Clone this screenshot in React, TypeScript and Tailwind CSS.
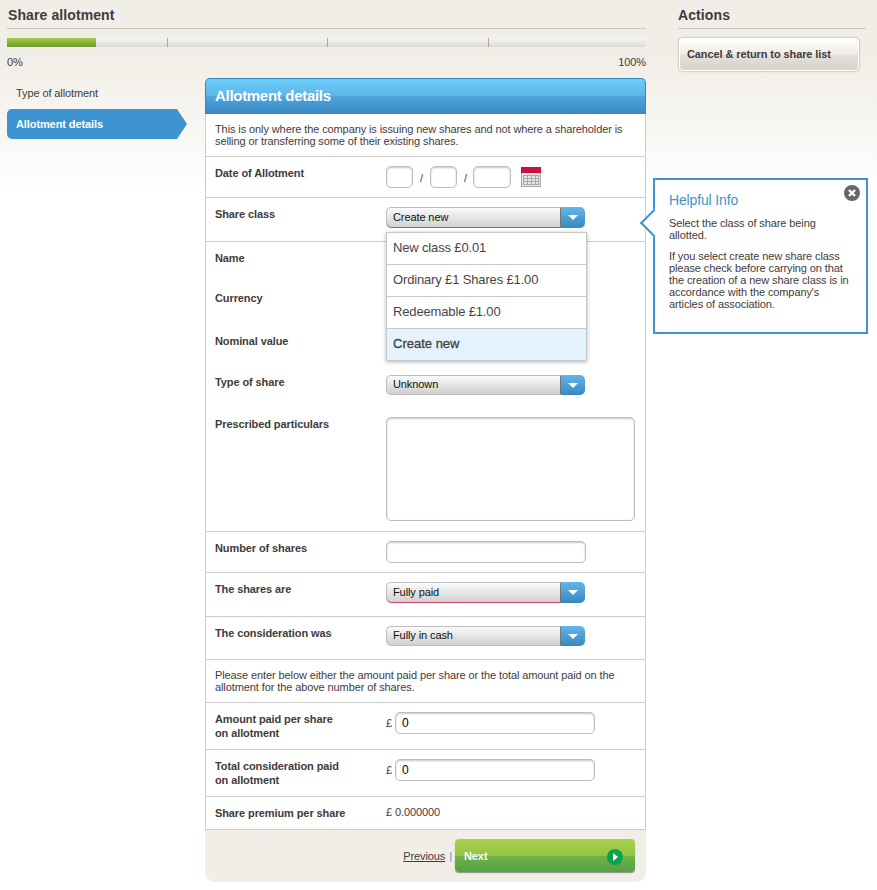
import { ReactNode } from "react";

function Caret() {
  return <span className="h-0 w-0 border-x-[5px] border-t-[5px] border-x-transparent border-t-white" />;
}

function FakeSelect({ value, error }: { value: string; error?: boolean }) {
  return (
    <div className={`flex w-[199px] ${error ? "h-[21px]" : "h-[20px]"}`}>
      <div
        className={`flex flex-1 items-center rounded-l-[5px] border border-r-[#777] border-[#bdbdbd] bg-gradient-to-b from-[#fbfbfb] to-[#cfcfcf] pl-[6px] pb-[2px] text-[11px] text-[#111] ${
          error ? "border-b-0 shadow-[inset_0_-1px_0_#d0476e]" : ""
        }`}
      >
        {value}
      </div>
      <div className="flex w-[24px] items-center justify-center rounded-r-[5px] bg-gradient-to-b from-[#62b6ea] to-[#3a87c0]">
        <Caret />
      </div>
    </div>
  );
}

function TextBox({ className }: { className: string }) {
  return (
    <div className={`rounded-[5px] border border-[#bdbdbd] bg-white text-[12px] leading-[20px] text-black shadow-[inset_0_1px_2px_#c8c8c8] ${className}`} />
  );
}

function Row({
  label,
  height,
  top,
  border = true,
  children,
}: {
  label: ReactNode;
  height: string;
  top: string;
  border?: boolean;
  children?: ReactNode;
}) {
  return (
    <div className={`flex pl-[9px] ${height} ${top} ${border ? "border-b border-[#cccccc]" : ""}`}>
      <div className="w-[171px] shrink-0 text-[11px] font-bold leading-[14px] text-[#3f3b3b]">{label}</div>
      {children}
    </div>
  );
}

function MoneyInput() {
  return (
    <div className="flex items-center self-start text-[11px]">
      <span className="w-[9px]">£</span>
      <div className="flex h-[22px] w-[200px] items-center rounded-[5px] border border-[#bdbdbd] bg-white pl-[6px] text-[12px] text-black shadow-[inset_0_1px_2px_#c8c8c8]">
        0
      </div>
    </div>
  );
}

function CalendarIcon() {
  return (
    <svg width="20" height="20" viewBox="0 0 20 20" className="ml-[10px] mt-px">
      <rect x="0.5" y="0.5" width="19" height="19" fill="#e6e6e6" stroke="#a8a8a8" />
      <rect x="0" y="0" width="20" height="6" fill="#c5123f" />
      <path
        d="M2.5 8.5h15M2.5 11.5h15M2.5 14.5h15M2.5 17.5h15M2.5 8v10M6.5 8v10M10.5 8v10M14.5 8v10M17.5 8v10"
        stroke="#a9a9a9"
        fill="none"
      />
    </svg>
  );
}

function CloseIcon() {
  return (
    <svg width="16" height="16" viewBox="0 0 16 16">
      <circle cx="8" cy="8" r="8" fill="#666666" />
      <path d="M5 5l6 6M11 5l-6 6" stroke="#ffffff" strokeWidth="2.4" />
    </svg>
  );
}

function NextIcon() {
  return (
    <svg width="16" height="16" viewBox="0 0 16 16">
      <circle cx="8" cy="8" r="8" fill="#0ca14a" />
      <path d="M6 4l5 4-5 4z" fill="#ffffff" />
    </svg>
  );
}

function ShareClassMenu() {
  const options = ["New class £0.01", "Ordinary £1 Shares £1.00", "Redeemable £1.00"];
  return (
    <div className="absolute left-[181px] top-[154px] z-10 w-[201px] border border-[#c8c8c8] bg-white text-[13px] tracking-[-0.15px] text-[#4a4545] shadow-[0_1px_4px_rgba(0,0,0,0.3)]">
      {options.map((o) => (
        <div key={o} className="flex h-[32px] items-center border-b border-[#c8c8c8] pb-[2px] pl-[6px]">
          {o}
        </div>
      ))}
      <div className="flex h-[31px] items-center bg-[#e3f2fc] pb-[2px] pl-[6px] tracking-normal text-[#444040] [-webkit-text-stroke:0.3px_#444040]">
        Create new
      </div>
    </div>
  );
}

function HelpfulInfo() {
  return (
    <div className="absolute left-[653px] top-[178px] z-20 h-[156px] w-[215px] border-2 border-[#3d94d1] bg-white pl-[14px] pr-[12px] pt-[12px] text-[11px] leading-[12px] text-[#3f3b3b]">
      <div className="absolute left-[-11px] top-[33px] h-[20px] w-[20px] rotate-45 border-b-2 border-l-2 border-[#3d94d1] bg-white" />
      <div className="absolute right-[6px] top-[5px]">
        <CloseIcon />
      </div>
      <h3 className="relative text-[14px] font-normal leading-[16px] tracking-[-0.15px] text-[#3d94d1]">Helpful Info</h3>
      <p className="relative mt-[9px]">Select the class of share being allotted.</p>
      <p className="mt-[9px]">
        If you select create new share class please check before carrying on that the creation of a new share class is in
        accordance with the company's articles of association.
      </p>
    </div>
  );
}

export default function App() {
  return (
    <div className="relative flex min-h-[890px] w-[877px] bg-[linear-gradient(#f1eee7_0,#f1eee7_60px,#ffffff_195px)] pl-[7px] font-['Liberation_Sans',sans-serif] tracking-[-0.1px] text-[#3f3b3b]">
      <div className="w-[639px] shrink-0">
        <h1 className="h-[29px] border-b border-[#c9c5bd] pl-px pt-[7px] text-[14px] font-bold leading-[16px] tracking-[0.1px]">
          Share allotment
        </h1>
        <div className="mt-[9px] flex h-[9px] bg-gradient-to-b from-[#f5f5f3] to-[#dcdad5]">
          <div className="h-full w-[89px] bg-gradient-to-b from-[#a4cc48] to-[#6f9a2e]" />
          <div className="ml-[71px] h-full w-px bg-[#aaa7a0]" />
          <div className="ml-[159px] h-full w-px bg-[#aaa7a0]" />
          <div className="ml-[160px] h-full w-px bg-[#aaa7a0]" />
        </div>
        <div className="mt-[8px] flex justify-between text-[11px] leading-[14px]">
          <span>0%</span>
          <span>100%</span>
        </div>
        <div className="mt-[9px] flex">
          <nav className="w-[198px] shrink-0 text-[11px] leading-[14px]">
            <div className="pl-[9px] pt-[8px]">Type of allotment</div>
            <div className="mt-[9px] flex h-[30px] w-[180px] items-center rounded-[5px] bg-[#3d94d1] pl-[9px] pb-[1px] font-bold text-white [clip-path:polygon(0_0,170px_0,180px_15px,170px_30px,0_30px)]">
              Allotment details
            </div>
          </nav>
          <main className="relative w-[441px]">
            <div className="flex h-[36px] items-center rounded-t-[5px] border border-b-0 border-[#3385c4] bg-[linear-gradient(#6ccdf8_0,#5ab5e9_50%,#50a6dd_50%,#3787c3_100%)] pl-[9px] text-[15px] font-bold tracking-[-0.3px] text-white">
              Allotment details
            </div>
            <div className="border-x border-[#cccccc] bg-white">
              <div className="h-[43px] border-b border-[#cccccc] px-[9px] pt-[9px] text-[11px] leading-[12px]">
                This is only where the company is issuing new shares and not where a shareholder is selling or transferring
                some of their existing shares.
              </div>
              <Row label="Date of Allotment" height="h-[41px]" top="pt-[9px]">
                <div className="flex items-start text-[11px]">
                  <TextBox className="h-[22px] w-[27px]" />
                  <span className="mx-[7px] mt-[6px] leading-[12px]">/</span>
                  <TextBox className="h-[22px] w-[27px]" />
                  <span className="ml-[7px] mr-[6px] mt-[6px] leading-[12px]">/</span>
                  <TextBox className="h-[22px] w-[38px]" />
                  <CalendarIcon />
                </div>
              </Row>
              <Row label="Share class" height="h-[44px]" top="pt-[9px]">
                <FakeSelect value="Create new" error />
              </Row>
              <Row label="Name" height="h-[39px]" top="pt-[9px]" border={false} />
              <Row label="Currency" height="h-[43px]" top="pt-[10px]" border={false} />
              <Row label="Nominal value" height="h-[41px]" top="pt-[10px]" border={false} />
              <Row label="Type of share" height="h-[41px]" top="pt-[10px]" border={false}>
                <FakeSelect value="Unknown" />
              </Row>
              <Row label="Prescribed particulars" height="h-[126px]" top="pt-[11px]">
                <TextBox className="h-[104px] w-[249px]" />
              </Row>
              <Row label="Number of shares" height="h-[41px]" top="pt-[9px]">
                <TextBox className="h-[22px] w-[200px]" />
              </Row>
              <Row label="The shares are" height="h-[44px]" top="pt-[9px]">
                <FakeSelect value="Fully paid" error />
              </Row>
              <Row label="The consideration was" height="h-[43px]" top="pt-[9px]">
                <FakeSelect value="Fully in cash" />
              </Row>
              <div className="h-[43px] border-b border-[#cccccc] px-[9px] pt-[9px] text-[11px] leading-[12px]">
                Please enter below either the amount paid per share or the total amount paid on the allotment for the above
                number of shares.
              </div>
              <Row
                label={
                  <>
                    Amount paid per share
                    <br />
                    on allotment
                  </>
                }
                height="h-[47px]"
                top="pt-[9px]"
              >
                <MoneyInput />
              </Row>
              <Row
                label={
                  <>
                    Total consideration paid
                    <br />
                    on allotment
                  </>
                }
                height="h-[47px]"
                top="pt-[9px]"
              >
                <MoneyInput />
              </Row>
              <Row label="Share premium per share" height="h-[33px]" top="pt-[9px]">
                <span className="text-[11px] leading-[12px]">£ 0.000000</span>
              </Row>
            </div>
            <div className="flex h-[52px] items-center justify-end rounded-b-[10px] bg-[#f1eee7] pb-[1px] pr-[11px] text-[11px]">
              <a className="mt-[2px] underline">Previous</a>
              <span className="ml-[4px] mt-[2px] text-[#3d94d1]">|</span>
              <button className="ml-[3px] flex h-[33px] w-[180px] items-center justify-between rounded-[4px] bg-[linear-gradient(#a9d24a_0,#93c446_50%,#6fb447_50%,#55a044_100%)] pl-[9px] pr-[12px] pt-[2px] text-[11px] font-bold text-white shadow-[0_1px_1px_rgba(0,0,0,0.4)]">
                Next
                <NextIcon />
              </button>
            </div>
            <ShareClassMenu />
          </main>
        </div>
      </div>
      <aside className="ml-[32px] w-[188px] shrink-0">
        <h2 className="h-[29px] border-b border-[#c9c5bd] pt-[7px] text-[14px] font-bold leading-[16px] tracking-[0.1px]">Actions</h2>
        <button className="ml-px mt-[9px] flex h-[33px] w-[180px] items-center rounded-[4px] border border-white bg-[linear-gradient(#ffffff_0,#eeebe4_50%,#e5e1d9_50%,#d8d3c9_100%)] pl-[7px] text-[11px] font-bold text-[#3f3b3b] shadow-[0_0_2px_rgba(0,0,0,0.45)]">
          Cancel &amp; return to share list
        </button>
      </aside>
      <HelpfulInfo />
    </div>
  );
}
